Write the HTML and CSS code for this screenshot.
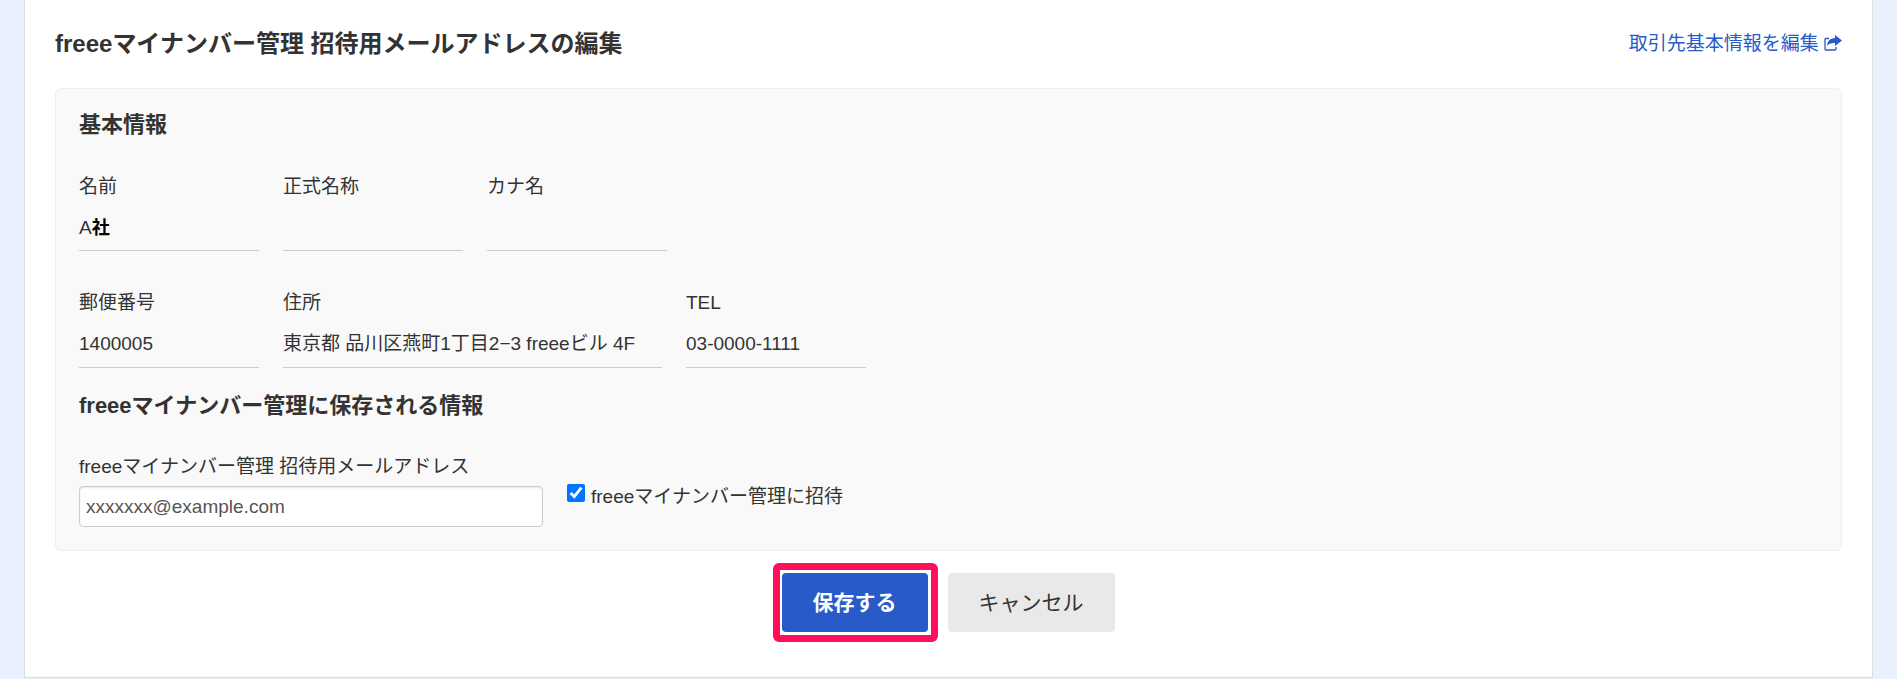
FILE: index.html
```html
<!DOCTYPE html>
<html lang="ja">
<head>
  <meta charset="UTF-8" />
  <title>freeeマイナンバー管理 招待用メールアドレスの編集</title>
  <link rel="stylesheet" href="styles.css">
</head>
<body>
  <main class="container">
    <header class="page-header">
      <h1>freeeマイナンバー管理 招待用メールアドレスの編集</h1>
      <a class="edit-link" href="#">取引先基本情報を編集
        <svg class="share-icon" viewBox="0 0 18 16" aria-hidden="true">
          <path d="M5 3.5H2Q1 3.5 1 4.500V14Q1 15 2 15H11Q12 15 12 14V12" fill="none" stroke="currentColor" stroke-width="1.300" />
          <path d="M11 0L18 5.500L11 11V8C7.500 7.800 5 8.500 3 11C3.500 6 6 3.200 11 3Z" fill="currentColor" />
        </svg>
      </a>
    </header>

    <form>
      <section class="panel">
        <h2>基本情報</h2>
        <dl class="field-row">
          <div class="field">
            <dt>名前</dt>
            <dd>A<b class="company">社</b></dd>
          </div>
          <div class="field">
            <dt>正式名称</dt>
            <dd></dd>
          </div>
          <div class="field">
            <dt>カナ名</dt>
            <dd></dd>
          </div>
        </dl>
        <dl class="field-row">
          <div class="field">
            <dt>郵便番号</dt>
            <dd>1400005</dd>
          </div>
          <div class="field field-wide">
            <dt>住所</dt>
            <dd>東京都 品川区燕町1丁目2−3 freeeビル 4F</dd>
          </div>
          <div class="field">
            <dt>TEL</dt>
            <dd>03-0000-1111</dd>
          </div>
        </dl>

        <h2>freeeマイナンバー管理に保存される情報</h2>
        <div class="input-row">
          <div class="input-box">
            <label for="email">freeeマイナンバー管理 招待用メールアドレス</label>
            <input type="email" id="email" value="xxxxxxx@example.com" />
          </div>
          <div class="check-box">
            <input type="checkbox" id="invite" checked />
            <label for="invite">freeeマイナンバー管理に招待</label>
          </div>
        </div>
      </section>

      <div class="actions">
        <div class="highlight">
          <button type="submit" class="btn btn-primary">保存する</button>
        </div>
        <button type="button" class="btn">キャンセル</button>
      </div>
    </form>
  </main>
</body>
</html>
```

FILE: styles.css
```css
* {
  box-sizing: border-box;
}
body {
  margin: 0;
  padding: 0 24px;
  background: #e9f1ff;
  color: #333;
  font-family: "Liberation Sans", Arial, "Noto Sans CJK JP", sans-serif;
  font-size: 19px;
  line-height: 30px;
}
.container {
  padding: 29px 30px 35px;
  background: #fff;
  border: 1px solid #ddd;
  border-top: none;
}
.page-header {
  display: flex;
  justify-content: space-between;
  align-items: center;
  margin-bottom: 29px;
}
h1,
h2,
dl,
dd {
  margin: 0;
}
h1 {
  font-size: 24px;
  line-height: 30px;
}
h2 {
  font-size: 22px;
  line-height: 30px;
}
.edit-link {
  color: #285ac8;
  text-decoration: none;
}
.share-icon {
  width: 18px;
  height: 16px;
  vertical-align: -1px;
}
.panel {
  padding: 21px 23px 23px;
  background: #f9f9f9;
  border: 1px solid #eee;
  border-radius: 6px;
}
.field-row {
  display: flex;
  gap: 24px;
  padding: 32px 0 23px;
}
.field-row + .field-row {
  padding: 14px 0 23px;
}
.field {
  width: 180px;
}
.field-wide {
  width: 379px;
}
.field dd {
  height: 49px;
  padding: 11px 0 7px;
  border-bottom: 1px solid #ccc;
  white-space: nowrap;
}
.field-row + .field-row dd {
  height: 50px;
}
.company {
  color: #000;
  font-size: 18px;
}
.input-row {
  display: flex;
  gap: 24px;
  padding-top: 31px;
}
.input-box {
  width: 464px;
}
.input-box label {
  display: block;
  margin-bottom: 4px;
}
.input-box input {
  display: block;
  width: 100%;
  height: 41px;
  padding: 0 6px;
  border: 1px solid #ccc;
  border-radius: 4px;
  box-shadow: inset 0 1px 2px rgba(0, 0, 0, 0.1);
  background: #fff;
  color: #555;
  font: inherit;
}
.check-box {
  display: flex;
  gap: 6px;
  padding-top: 30px;
}
.check-box input {
  width: 18px;
  height: 18px;
  margin: 2px 0 0;
}
.actions {
  display: flex;
  justify-content: center;
  align-items: center;
  gap: 10px;
  padding: 12px 10px 0 0;
}
.highlight {
  padding: 3px 3px 3px 2px;
  border: 7px solid #ff0f5b;
  border-radius: 6px;
}
.btn {
  display: block;
  height: 59px;
  padding: 0 31px 4px;
  border: none;
  border-radius: 4px;
  background: #e9e9e9;
  color: #333;
  font-family: inherit;
  font-size: 21px;
  cursor: pointer;
}
.btn-primary {
  background: #285ac8;
  color: #fff;
  font-weight: bold;
}
```
